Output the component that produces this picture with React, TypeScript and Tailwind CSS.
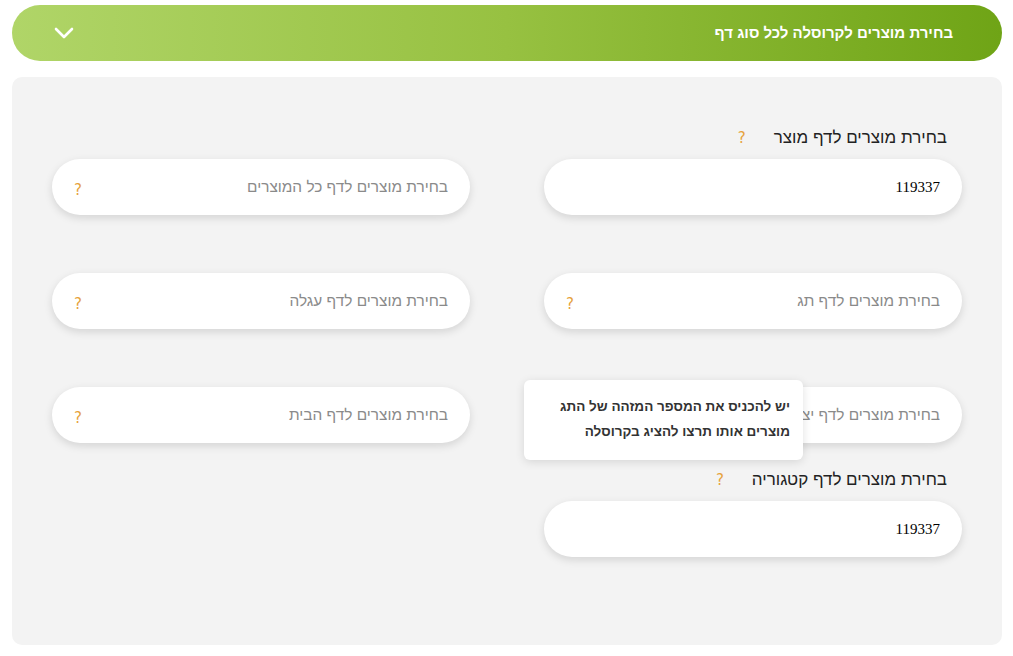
import React from "react";

const Q = () => (
  <span className="text-[#e6a23c] text-[15px] leading-none" style={{ fontFamily: '"DejaVu Sans", sans-serif' }}>?</span>
);

type FieldProps = { label: string; value?: string };

const Field = ({ label, value }: FieldProps) => (
  <div className="h-[114px] flex flex-col justify-end">
    {value ? (
      <>
        <div className="flex items-center gap-[28px] pr-[15px] mb-[11px] h-[20px]">
          <span className="text-[17px] text-[#222]">{label}</span>
          <Q />
        </div>
        <div className="h-[56px] rounded-full bg-white shadow-[0_3px_8px_rgba(0,0,0,0.13)] flex items-center pr-[22px]">
          <span className="text-[15px] text-black" style={{ fontFamily: '"Liberation Serif", serif' }}>{value}</span>
        </div>
      </>
    ) : (
      <div className="h-[56px] rounded-full bg-white shadow-[0_3px_8px_rgba(0,0,0,0.13)] flex items-center justify-between pr-[22px] pl-[22px]">
        <span className="text-[15.4px] text-[#8a8a8a]">{label}</span>
        <span className="mt-[6px]"><Q /></span>
      </div>
    )}
  </div>
);

export default function App() {
  return (
    <div dir="rtl" className="w-[1013px] h-[656px] bg-white pr-[11px] pl-[12px] pt-[5px]" style={{ fontFamily: '"Liberation Sans", Arial, sans-serif' }}>
      <div className="h-[56px] rounded-full bg-[linear-gradient(to_left,#6fa416,#97c141_50%,#b0d568)] flex items-center justify-between pr-[49px] pl-[42px]">
        <span className="text-white font-bold text-[15px]">בחירת מוצרים לקרוסלה לכל סוג דף</span>
        <svg width="20" height="14" viewBox="0 0 20 14" fill="none">
          <path d="M2 3 L10 11 L18 3" stroke="white" strokeWidth="2.6" strokeLinecap="round" strokeLinejoin="round" />
        </svg>
      </div>
      <div className="mt-[16px] h-[568px] rounded-[10px] bg-[#f3f3f3] px-[40px] pt-[24px]">
        <div className="grid grid-cols-2 gap-x-[74px]">
          <div className="flex flex-col">
            <Field label="בחירת מוצרים לדף מוצר" value="119337" />
            <Field label="בחירת מוצרים לדף תג" />
            <div className="relative">
              <Field label="בחירת מוצרים לדף יצרן" />
              <div className="absolute left-[-20px] top-[51px] w-[279px] h-[80px] bg-white rounded-[6px] shadow-[0_2px_10px_rgba(0,0,0,0.12)] pr-[13px] pt-[14px]">
                <p className="text-[13.5px] font-bold text-[#333] leading-[25px]">יש להכניס את המספר המזהה של התג<br />מוצרים אותו תרצו להציג בקרוסלה</p>
              </div>
            </div>
            <Field label="בחירת מוצרים לדף קטגוריה" value="119337" />
          </div>
          <div className="flex flex-col">
            <Field label="בחירת מוצרים לדף כל המוצרים" />
            <Field label="בחירת מוצרים לדף עגלה" />
            <Field label="בחירת מוצרים לדף הבית" />
          </div>
        </div>
      </div>
    </div>
  );
}
